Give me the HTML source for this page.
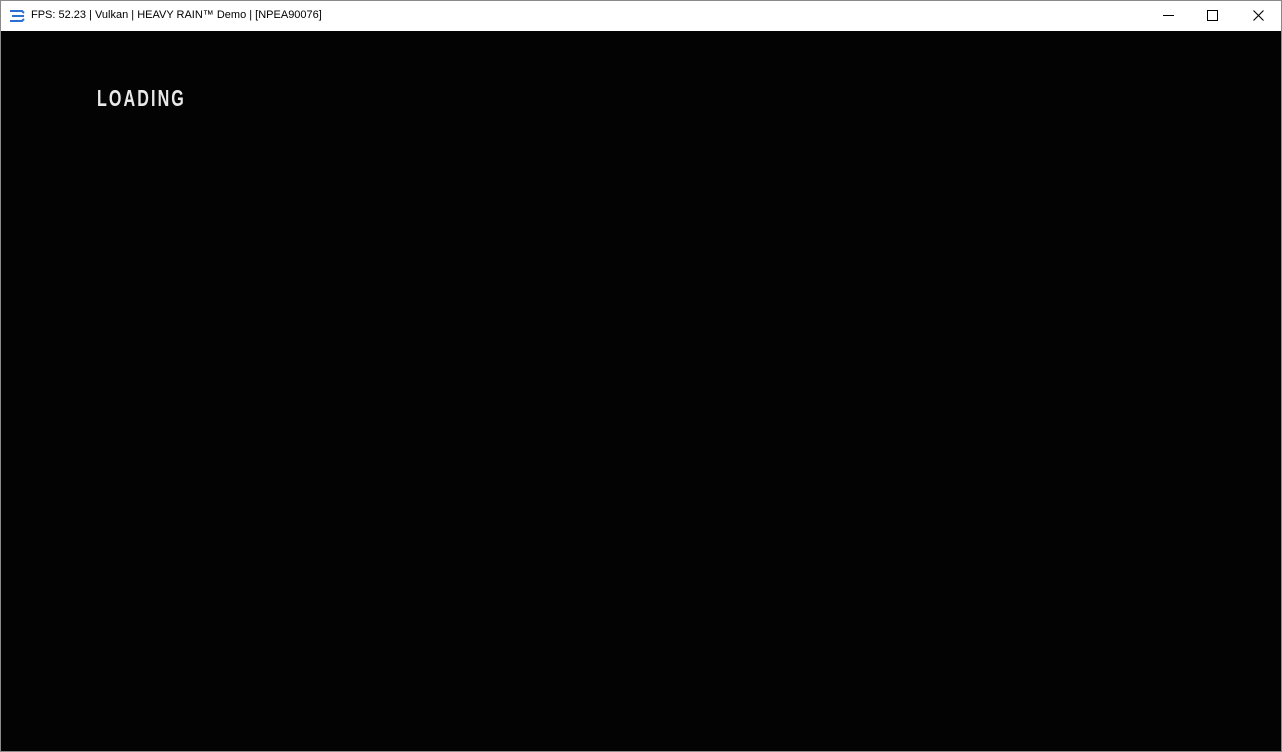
<!DOCTYPE html>
<html><head><style>
html,body{margin:0;padding:0;width:1282px;height:752px;overflow:hidden;background:#fff}
.win{position:absolute;left:0;top:0;width:1280px;height:750px;border:1px solid #8a8a8a;background:#fff}
.title{position:absolute;left:0;top:0;width:1280px;height:30px;background:#fff;font-family:"Liberation Sans",sans-serif;font-size:11px;color:#000}
.title .t{position:absolute;left:30px;top:8px;white-space:nowrap}
.game{position:absolute;left:0;top:30px;width:1280px;height:720px;background:#030303}
.load{position:absolute;left:96px;top:54px;font-family:"Liberation Sans",sans-serif;font-size:23px;color:#e8e8e8;letter-spacing:3px;transform:scaleX(0.7);transform-origin:left top;font-weight:bold}
</style></head><body>
<div class="win">
<div class="title">
<svg style="position:absolute;left:8px;top:9px" width="16" height="12" viewBox="0 0 16 12"><g stroke="#2a6fd6" stroke-width="2" fill="none"><path d="M1 1H13L15 3"/><path d="M3 6H15"/><path d="M1 11H13L15 9"/></g></svg>
<span class="t">FPS: 52.23 | Vulkan | HEAVY RAIN™ Demo | [NPEA90076]</span>
<svg style="position:absolute;left:1162px;top:14px" width="12" height="2"><rect width="11" height="1" fill="#000"/></svg>
<svg style="position:absolute;left:1206px;top:9px" width="12" height="12"><rect x="0.5" y="0.5" width="10" height="10" fill="none" stroke="#000"/></svg>
<svg style="position:absolute;left:1252px;top:9px" width="12" height="12"><path d="M0.5 0.5L10.5 10.5M10.5 0.5L0.5 10.5" stroke="#000" stroke-width="1.1"/></svg>
</div>
<div class="game"><div class="load">LOADING</div></div>
</div>
</body></html>
